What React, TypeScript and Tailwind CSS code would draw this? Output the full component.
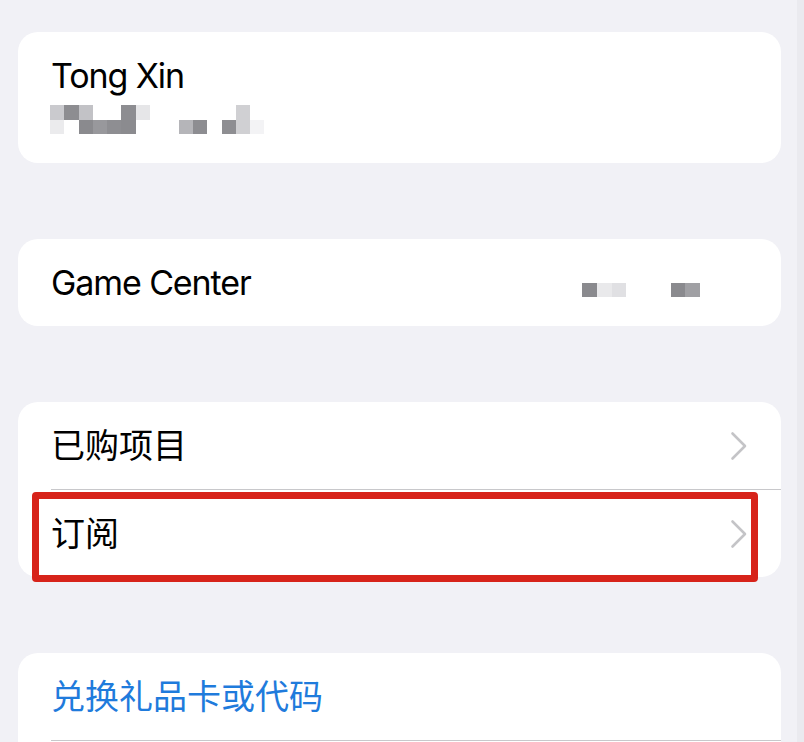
import React from "react";

const font = { fontFamily: 'Inter, "Noto Sans CJK SC", sans-serif' };

function Chevron() {
  return (
    <svg width="18" height="30" viewBox="0 0 18 30" fill="none" className="shrink-0">
      <polyline points="2.5,2.5 15,15 2.5,27.5" stroke="#c4c4c7" strokeWidth="2.6" strokeLinecap="round" strokeLinejoin="round" />
    </svg>
  );
}

const row1: string[] = [
  "#cacace", "#8d8d91", "#c2c2c6", "", "", "#8d8d91", "#e6e6e8", "", "", "", "", "", "", "#d0d0d3", "",
];
const row2: string[] = [
  "#ebebed", "", "#8a8a8e", "#98989c", "#8e8e92", "#8b8b8f", "", "", "", "#b5b5b9", "#8d8d91", "", "#8e8e92", "#d0d0d3", "#f3f3f5",
];
const gcRow: string[] = ["#8a8a8e", "#e9e9eb", "#e0e0e3", "", "", "", "#8a8a8e", "#a0a0a4"];

function BlockRow({ cells, w, h }: { cells: string[]; w: string; h: string }) {
  return (
    <div className="flex">
      {cells.map((c, i) => (
        <div key={i} className={`${w} ${h} shrink-0`} style={{ backgroundColor: c || "transparent" }} />
      ))}
    </div>
  );
}

export default function App() {
  return (
    <div className="flex w-[804px] h-[742px] overflow-hidden bg-[#f1f1f6] text-black" style={font}>
      <div className="flex-1 flex flex-col pt-[32px] pl-[18px] pr-[16px] gap-[76px]">
        {/* Card 1 */}
        <div className="h-[131px] shrink-0 rounded-[20px] bg-white pl-[33px] pt-[24px]">
          <div className="text-[34px] leading-[40px] tracking-[-1.1px]">Tong Xin</div>
          <div className="mt-[9px] -ml-[1px] flex flex-col">
            <BlockRow cells={row1} w="w-[14.3px]" h="h-[14.5px]" />
            <BlockRow cells={row2} w="w-[14.3px]" h="h-[14.5px]" />
          </div>
        </div>

        {/* Card 2 */}
        <div className="h-[87px] shrink-0 rounded-[20px] bg-white pl-[33px] pr-[81px] flex items-center justify-between">
          <div className="text-[34px] leading-[40px] tracking-[-1.1px]">Game Center</div>
          <div className="mt-[15px]">
            <BlockRow cells={gcRow} w="w-[14.75px]" h="h-[14px]" />
          </div>
        </div>

        {/* Card 3 */}
        <div className="relative shrink-0 rounded-[20px] bg-white">
          <div className="h-[87px] pl-[33px] pr-[33px] flex items-center justify-between">
            <div className="text-[34px] leading-[40px]">已购项目</div>
            <Chevron />
          </div>
          <div className="ml-[33px] h-px bg-[#c8c8cb]" />
          <div className="h-[87px] pl-[33px] pr-[33px] flex items-center justify-between">
            <div className="text-[34px] leading-[40px]">订阅</div>
            <Chevron />
          </div>
          <div className="absolute left-[14px] top-[90px] w-[726px] h-[90px] border-[7px] border-[#d7231a] rounded-[4px]" />
        </div>

        {/* Card 4 */}
        <div className="shrink-0 rounded-t-[20px] bg-white">
          <div className="h-[87px] pl-[33px] flex items-center">
            <div className="text-[34px] leading-[40px] text-[#1f7bdc]">兑换礼品卡或代码</div>
          </div>
          <div className="ml-[33px] h-px bg-[#c8c8cb]" />
          <div className="h-[60px]" />
        </div>
      </div>
      <div className="w-[7px] shrink-0 bg-[#eaeaef]" />
    </div>
  );
}
